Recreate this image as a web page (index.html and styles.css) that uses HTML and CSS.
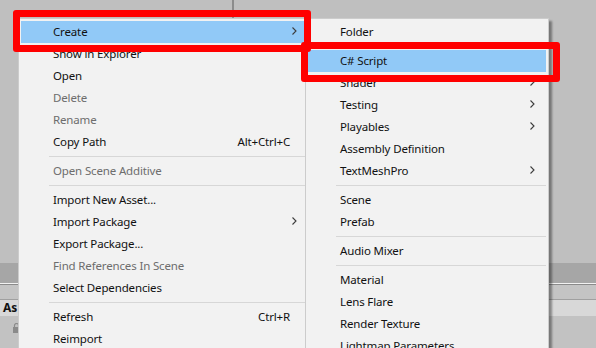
FILE: index.html
```html
<!DOCTYPE html>
<html lang="en">
<head>
<meta charset="UTF-8">
<title>Create C# Script</title>
<link rel="stylesheet" href="styles.css">
</head>
<body>
  <div class="backdrop">
    <div class="pane"><div class="divider"></div></div>
    <div class="tabbar"></div>
    <div class="gap"></div>
    <div class="header">As</div>
    <div class="rest">
      <svg class="lock" width="7" height="10" viewBox="0 0 7 10">
        <path d="M1.5 4 V2.5 a2 2 0 0 1 4 0 V4" fill="none" stroke="#8a8a8a" stroke-width="1.2"/>
        <rect x="0" y="4" width="7" height="6" fill="#8a8a8a"/>
      </svg>
    </div>
  </div>

  <!-- context menu -->
  <div class="menu main-menu">
    <div class="item active">Create <svg class="arrow" width="5" height="8" viewBox="0 0 5 8"><polyline points="0.5,0.5 4,4 0.5,7.5"/></svg></div>
    <div class="item">Show in Explorer</div>
    <div class="item">Open</div>
    <div class="item disabled">Delete</div>
    <div class="item disabled">Rename</div>
    <div class="item">Copy Path <span class="shortcut">Alt+Ctrl+C</span></div>
    <div class="sep"></div>
    <div class="item disabled">Open Scene Additive</div>
    <div class="sep"></div>
    <div class="item">Import New Asset...</div>
    <div class="item">Import Package <svg class="arrow" width="5" height="8" viewBox="0 0 5 8"><polyline points="0.5,0.5 4,4 0.5,7.5"/></svg></div>
    <div class="item">Export Package...</div>
    <div class="item disabled">Find References In Scene</div>
    <div class="item">Select Dependencies</div>
    <div class="sep"></div>
    <div class="item">Refresh <span class="shortcut">Ctrl+R</span></div>
    <div class="item">Reimport</div>
  </div>

  <!-- Create submenu -->
  <div class="menu sub-menu">
    <div class="item">Folder</div>
    <div class="sep"></div>
    <div class="item active">C# Script</div>
    <div class="item">Shader <svg class="arrow" width="5" height="8" viewBox="0 0 5 8"><polyline points="0.5,0.5 4,4 0.5,7.5"/></svg></div>
    <div class="item">Testing <svg class="arrow" width="5" height="8" viewBox="0 0 5 8"><polyline points="0.5,0.5 4,4 0.5,7.5"/></svg></div>
    <div class="item">Playables <svg class="arrow" width="5" height="8" viewBox="0 0 5 8"><polyline points="0.5,0.5 4,4 0.5,7.5"/></svg></div>
    <div class="item">Assembly Definition</div>
    <div class="item">TextMeshPro <svg class="arrow" width="5" height="8" viewBox="0 0 5 8"><polyline points="0.5,0.5 4,4 0.5,7.5"/></svg></div>
    <div class="sep"></div>
    <div class="item">Scene</div>
    <div class="item">Prefab</div>
    <div class="sep"></div>
    <div class="item">Audio Mixer</div>
    <div class="sep"></div>
    <div class="item">Material</div>
    <div class="item">Lens Flare</div>
    <div class="item">Render Texture</div>
    <div class="item">Lightmap Parameters</div>
  </div>

  <!-- annotation boxes -->
  <div class="mark mark-create"></div>
  <div class="mark mark-script"></div>
</body>
</html>
```
FILE: styles.css
```css
body {
  margin: 0;
  width: 596px;
  height: 348px;
  overflow: hidden;
  position: relative;
  background: #bfbfbf;
  font-family: "Noto Sans", "Open Sans", Arial, sans-serif;
  font-size: 11.5px;
  letter-spacing: -0.15px;
  color: #111;
}

/* editor behind the menu */
.backdrop {
  display: flex;
  flex-direction: column;
  height: 348px;
}

.pane {
  height: 263px;
}

.divider {
  margin-left: 232px;
  width: 2px;
  height: 18px;
  background: #8c8c8c;
}

.tabbar {
  height: 20px;
  background: #a6a6a6;
  border-bottom: 1px solid #f2f2f2;
  box-shadow: 0 1px 0 #8a8a8a;
}

.gap {
  height: 14px;
  margin-top: 1px;
  background: #c4c4c4;
  border-bottom: 1px solid #a0a0a0;
}

.header {
  height: 16px;
  line-height: 16px;
  background: #d8d8d8;
  padding-left: 3px;
  font-weight: bold;
  font-size: 12px;
}

.rest {
  flex: 1;
  background: #c2c2c2;
  padding: 7px 0 0 13px;
}

.lock {
  display: block;
}

/* menus */
.menu {
  position: absolute;
  top: 18px;
  background: #f2f2f2;
  border: 1px solid #cccccc;
  padding: 2px;
}

.main-menu {
  left: 18px;
  width: 287px;
}

.sub-menu {
  left: 305px;
  width: 238px;
  box-shadow: 3px 3px 2px rgba(0, 0, 0, 0.38);
  z-index: 1;
}

.item {
  display: flex;
  align-items: center;
  height: 22px;
  box-sizing: border-box;
  padding: 0 11px 2px 32px;
  white-space: nowrap;
}

.item.active {
  background: #91c9f7;
}

.item.disabled {
  color: #6d6d6d;
}

.shortcut {
  margin-left: auto;
  margin-right: 7px;
}

.arrow {
  margin-left: auto;
  fill: none;
  stroke: #3c3c3c;
  stroke-width: 1.1;
}

.sep {
  height: 1px;
  margin: 3px 0 3px 28px;
  background: #d7d7d7;
}

/* red highlight boxes */
.mark {
  position: absolute;
  border: 7px solid #ff0000;
  border-radius: 3px;
  z-index: 2;
}

.mark-create {
  left: 13px;
  top: 10px;
  width: 284px;
  height: 28px;
}

.mark-script {
  left: 301px;
  top: 42px;
  width: 245px;
  height: 26px;
}
```
